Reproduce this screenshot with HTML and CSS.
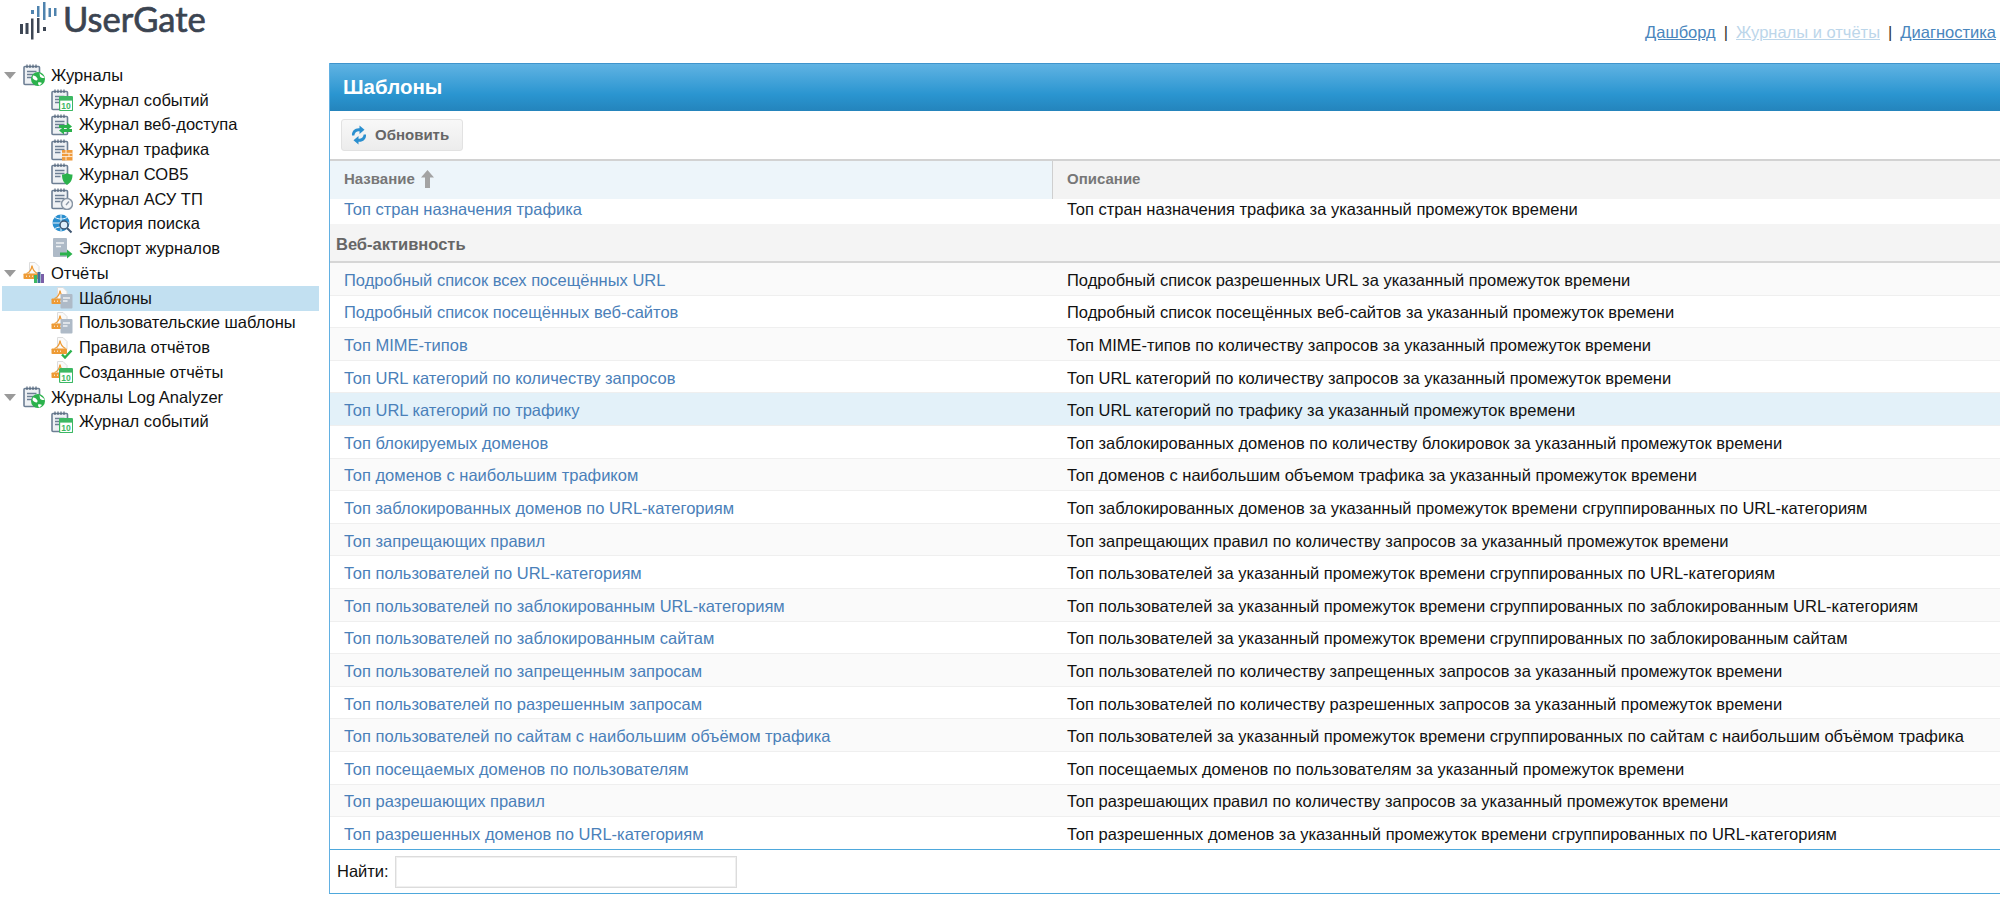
FILE: index.html
```html
<!DOCTYPE html>
<html lang="ru">
<head>
<meta charset="utf-8">
<title>UserGate</title>
<link rel="stylesheet" href="styles.css">
</head>
<body>
<svg class="defs" width="0" height="0" aria-hidden="true">
  <defs>
    <symbol id="note" viewBox="0 0 22 22">
      <rect x="1" y="2.5" width="15.500" height="18" rx="1" fill="#eef1f4" stroke="#6d7f94" stroke-width="1.6"/>
      <path d="M4 .5v3.500M7 .5v3.500M10 .5v3.500M13 .5v3.500" stroke="#55677c" stroke-width="1.2"/>
      <path d="M4 7.500h9.500M4 10.500h9.500M4 13.500h5.500" stroke="#6d7f94" stroke-width="1.300"/>
    </symbol>
    <symbol id="pdf" viewBox="0 0 22 22">
      <path d="M6.500 0.500h5.500l4 4v8H6.500z" fill="#fafafa" stroke="#dcdcdc"/>
      <path d="M3.500 11.500c3-1 5-4 5.500-8 .5 4 2.500 6.500 5.500 8" fill="none" stroke="#ee9b35" stroke-width="1.300"/>
      <rect x="0.500" y="11.500" width="15.500" height="5.500" rx=".8" fill="#ee9b35"/>
      <path d="M3 14.200h1M6 14.200h1M9 14.200h1" stroke="#fff" stroke-width="1"/>
    </symbol>
    <symbol id="form" viewBox="0 0 22 22">
      <rect x="9.500" y="7" width="12" height="14.500" rx="1" fill="#aebac7"/>
      <path d="M12 11h7M12 14h4.500" stroke="#eef1f4" stroke-width="1.300"/>
    </symbol>
    <symbol id="cal" viewBox="0 0 22 22">
      <rect x="8.600" y="7.600" width="13" height="14" rx="1" fill="#fff" stroke="#3cb863" stroke-width="1.200"/>
      <rect x="8.600" y="7.600" width="13" height="4" fill="#3cb863"/>
      <text x="15.100" y="20" class="cal-num">10</text>
    </symbol>
    <symbol id="earth" viewBox="0 0 22 22">
      <circle cx="15" cy="15" r="7" fill="#2bb24c"/>
      <path d="M10 11.500c2 0 3.500 1 4 2.500 1 .5 .5 2.500-.5 2.500-1.500 0-3-1-4-2.500zM16.500 9c1 1.500 3.500 2 5 4.500-1.500 1-3.500 .5-4.500-1zM15 18.500c1.500-.5 3-.5 4 .5l-2.500 2.500c-1 0-1.500-2-1.500-3z" fill="#fff"/>
    </symbol>
  </defs>
</svg>

<header class="top">
  <div class="logo">
    <svg class="logo-mark" width="40" height="40" viewBox="0 0 40 40">
      <g class="bars-dark">
        <rect x="1" y="24" width="3" height="10"/>
        <rect x="6.500" y="23" width="3" height="11"/>
        <rect x="12" y="18.500" width="2.500" height="21"/>
        <rect x="18" y="18" width="2.500" height="15"/>
        <rect x="24" y="27" width="3" height="4"/>
      </g>
      <g class="bars-blue">
        <rect x="12" y="10" width="3" height="4"/>
        <rect x="18" y="6" width="2.500" height="11"/>
        <rect x="24" y="2" width="2.500" height="18"/>
        <rect x="29.500" y="8" width="2.500" height="9"/>
        <rect x="35" y="8" width="2.500" height="8"/>
      </g>
    </svg>
    <span class="logo-text">UserGate</span>
  </div>
  <nav class="nav">
    <a href="#">Дашборд</a><span class="sep">|</span><a href="#" class="off">Журналы и отчёты</a><span class="sep">|</span><a href="#">Диагностика</a>
  </nav>
</header>

<main class="main">
  <aside class="tree">
    <div class="node parent"><i class="arrow"></i><svg class="ico"><use href="#note"/><use href="#earth"/></svg>Журналы</div>
    <div class="node"><svg class="ico"><use href="#note"/><use href="#cal"/></svg>Журнал событий</div>
    <div class="node"><svg class="ico" viewBox="0 0 22 22"><use href="#note" width="22" height="22"/><path d="M8 11h8V8.500l5 4-5 4V14H8z" fill="#2bb24c"/><path d="M21 15h-8v-2.500l-5 4 5 4V18h8z" fill="#2bb24c"/></svg>Журнал веб-доступа</div>
    <div class="node"><svg class="ico" viewBox="0 0 22 22"><use href="#note" width="22" height="22"/><rect x="11" y="11" width="10.500" height="10.500" fill="#ef9a3a"/><path d="M11 14.300h10.500M11 17.600h10.500M15 11v3.300M18 14.300v3.300M15 17.600V21.500" stroke="#fff" stroke-width=".8"/></svg>Журнал трафика</div>
    <div class="node"><svg class="ico" viewBox="0 0 22 22"><use href="#note" width="22" height="22"/><path d="M11 11.500c3.500 0 5-1.500 5-1.500s1.500 1.500 5.500 1.500c0 5-1.500 8-5.500 10.500-3.500-2.500-5-5.500-5-10.500z" fill="#2bb24c"/></svg>Журнал СОВ5</div>
    <div class="node"><svg class="ico" viewBox="0 0 22 22"><use href="#note" width="22" height="22"/><circle cx="16" cy="16" r="5.500" fill="#f4f5f7" stroke="#8a97a6" stroke-width="1.500"/><path d="M15 17l3-3.500" stroke="#8a97a6" stroke-width="1.300"/></svg>Журнал АСУ ТП</div>
    <div class="node"><svg class="ico" viewBox="0 0 22 22"><circle cx="10" cy="10" r="8.500" fill="#2a8fcf"/><path d="M1.500 10h17M10 1.500v17M4 4.500c4 2 8 2 12 0M4 15.500c4-2 8-2 12 0" stroke="#fff" stroke-width=".9" fill="none"/><circle cx="13" cy="12" r="4" fill="#dfeefa" stroke="#3e5672" stroke-width="1.500"/><path d="M16 15l4.500 4.500" stroke="#3e5672" stroke-width="2"/></svg>История поиска</div>
    <div class="node"><svg class="ico" viewBox="0 0 22 22"><rect x="2" y="0" width="14" height="19" rx="1" fill="#aebac7"/><path d="M5 5h8M5 8.500h5" stroke="#eef1f4" stroke-width="1.500"/><path d="M9 14.500h7V11.500l5.500 4.500-5.500 4.500v-3H9z" fill="#2bb24c"/></svg>Экспорт журналов</div>
    <div class="node parent"><i class="arrow"></i><svg class="ico" viewBox="0 0 22 22"><use href="#pdf" width="22" height="22"/><rect x="11" y="13" width="3" height="8" fill="#3cb863"/><rect x="14.500" y="10" width="3" height="11" fill="#3e6f9e"/><rect x="18" y="12" width="3" height="9" fill="#7a5fa8"/></svg>Отчёты</div>
    <div class="node selected"><svg class="ico"><use href="#pdf"/><use href="#form"/></svg>Шаблоны</div>
    <div class="node"><svg class="ico"><use href="#pdf"/><use href="#form"/></svg>Пользовательские шаблоны</div>
    <div class="node"><svg class="ico" viewBox="0 0 22 22"><use href="#pdf" width="22" height="22"/><path d="M11 17.500l3 3 6.500-7" fill="none" stroke="#2bb24c" stroke-width="2.400"/></svg>Правила отчётов</div>
    <div class="node"><svg class="ico"><use href="#pdf"/><use href="#cal"/></svg>Созданные отчёты</div>
    <div class="node parent"><i class="arrow"></i><svg class="ico"><use href="#note"/><use href="#earth"/></svg>Журналы Log Analyzer</div>
    <div class="node"><svg class="ico"><use href="#note"/><use href="#cal"/></svg>Журнал событий</div>
  </aside>

  <section class="panel">
    <h1 class="panel-title">Шаблоны</h1>
    <div class="toolbar">
      <button class="btn" type="button">
        <svg class="btn-ico" width="18" height="20" viewBox="0 0 18 20">
          <path d="M2 10.500C1.500 6 5 2.800 9.500 3.200V.5l5 4.300-5 4.300V6.300C7 6 4.600 7.500 4.300 10.500z" fill="#2a8fcf"/>
          <path d="M16 9.500c.5 4.500-3 7.700-7.500 7.300v2.700l-5-4.300 5-4.300v2.800c2.500.3 4.900-1.200 5.200-4.200z" fill="#2a8fcf"/>
        </svg>
        Обновить
      </button>
    </div>
    <div class="col-head">
      <div class="col-name">Название
        <svg class="sort" width="13" height="18" viewBox="0 0 13 18"><path d="M6.500 0L13 7.500H9V18H4V7.500H0z" fill="#a3a3a3"/></svg>
      </div>
      <div class="col-desc">Описание</div>
    </div>
    <div class="list">
      <div class="row partial"><a href="#" class="c-name">Топ стран назначения трафика</a><span class="c-desc">Топ стран назначения трафика за указанный промежуток времени</span></div>
      <div class="group">Веб-активность</div>
      <div class="row"><a href="#" class="c-name">Подробный список всех посещённых URL</a><span class="c-desc">Подробный список разрешенных URL за указанный промежуток времени</span></div>
      <div class="row"><a href="#" class="c-name">Подробный список посещённых веб-сайтов</a><span class="c-desc">Подробный список посещённых веб-сайтов за указанный промежуток времени</span></div>
      <div class="row"><a href="#" class="c-name">Топ MIME-типов</a><span class="c-desc">Топ MIME-типов по количеству запросов за указанный промежуток времени</span></div>
      <div class="row"><a href="#" class="c-name">Топ URL категорий по количеству запросов</a><span class="c-desc">Топ URL категорий по количеству запросов за указанный промежуток времени</span></div>
      <div class="row hover"><a href="#" class="c-name">Топ URL категорий по трафику</a><span class="c-desc">Топ URL категорий по трафику за указанный промежуток времени</span></div>
      <div class="row"><a href="#" class="c-name">Топ блокируемых доменов</a><span class="c-desc">Топ заблокированных доменов по количеству блокировок за указанный промежуток времени</span></div>
      <div class="row"><a href="#" class="c-name">Топ доменов с наибольшим трафиком</a><span class="c-desc">Топ доменов с наибольшим объемом трафика за указанный промежуток времени</span></div>
      <div class="row"><a href="#" class="c-name">Топ заблокированных доменов по URL-категориям</a><span class="c-desc">Топ заблокированных доменов за указанный промежуток времени сгруппированных по URL-категориям</span></div>
      <div class="row"><a href="#" class="c-name">Топ запрещающих правил</a><span class="c-desc">Топ запрещающих правил по количеству запросов за указанный промежуток времени</span></div>
      <div class="row"><a href="#" class="c-name">Топ пользователей по URL-категориям</a><span class="c-desc">Топ пользователей за указанный промежуток времени сгруппированных по URL-категориям</span></div>
      <div class="row"><a href="#" class="c-name">Топ пользователей по заблокированным URL-категориям</a><span class="c-desc">Топ пользователей за указанный промежуток времени сгруппированных по заблокированным URL-категориям</span></div>
      <div class="row"><a href="#" class="c-name">Топ пользователей по заблокированным сайтам</a><span class="c-desc">Топ пользователей за указанный промежуток времени сгруппированных по заблокированным сайтам</span></div>
      <div class="row"><a href="#" class="c-name">Топ пользователей по запрещенным запросам</a><span class="c-desc">Топ пользователей по количеству запрещенных запросов за указанный промежуток времени</span></div>
      <div class="row"><a href="#" class="c-name">Топ пользователей по разрешенным запросам</a><span class="c-desc">Топ пользователей по количеству разрешенных запросов за указанный промежуток времени</span></div>
      <div class="row"><a href="#" class="c-name">Топ пользователей по сайтам с наибольшим объёмом трафика</a><span class="c-desc">Топ пользователей за указанный промежуток времени сгруппированных по сайтам с наибольшим объёмом трафика</span></div>
      <div class="row"><a href="#" class="c-name">Топ посещаемых доменов по пользователям</a><span class="c-desc">Топ посещаемых доменов по пользователям за указанный промежуток времени</span></div>
      <div class="row"><a href="#" class="c-name">Топ разрешающих правил</a><span class="c-desc">Топ разрешающих правил по количеству запросов за указанный промежуток времени</span></div>
      <div class="row"><a href="#" class="c-name">Топ разрешенных доменов по URL-категориям</a><span class="c-desc">Топ разрешенных доменов за указанный промежуток времени сгруппированных по URL-категориям</span></div>
    </div>
    <div class="search">
      <label class="search-label" for="q">Найти:</label>
      <input class="search-input" id="q" type="text">
    </div>
  </section>
</main>
</body>
</html>
```

FILE: styles.css
```css
* { box-sizing: border-box; }
html, body { margin: 0; height: 100%; overflow: hidden; background: #fff; }
body { font-family: "Liberation Sans", Arial, sans-serif; font-size: 16.500px; color: #111; }
.defs { display: block; height: 0; }

.top { display: flex; justify-content: space-between; height: 63px; padding-right: 4px; }
.logo { display: flex; align-items: flex-start; padding-left: 19px; }
.logo-mark { flex: none; margin-right: 4px; }
.bars-dark { fill: #3d4654; }
.bars-blue { fill: #4f83ae; }
.logo-text { font-family: Lato, sans-serif; font-size: 34.500px; font-weight: 400; line-height: 38px; color: #3b4451; -webkit-text-stroke: 0.7px #3b4451; }
.nav { display: flex; align-items: baseline; padding-top: 23px; line-height: 18px; }
.nav a { color: #4a86bd; text-decoration: underline; }
.nav a.off { color: #bcd6ea; }
.sep { margin: 0 8px; color: #333; }

.main { display: flex; height: 831px; }
.tree { flex: none; width: 329px; padding: 0 10px 0 2px; }
.node { display: flex; align-items: center; height: 24.750px; padding-left: 49px; white-space: nowrap; }
.node.parent { padding-left: 0; }
.node.selected { background: #c2e0f1; }
.arrow { flex: none; width: 0; height: 0; margin: 0 7px 0 2px; border-style: solid; border-width: 7px 6px 0; border-color: #9a9a9a transparent transparent; }
.ico { flex: none; width: 22px; height: 22px; margin-right: 6px; }
.cal-num { font: bold 8.500px "Liberation Sans", sans-serif; fill: #3cb863; text-anchor: middle; }

.panel { flex: none; width: 1680px; height: 831px; display: flex; flex-direction: column; border-left: 1px solid #62b0e2; border-bottom: 1px solid #4ea8dc; }
.panel-title { flex: none; margin: 0; height: 48px; padding: 0 0 2px 13px; display: flex; align-items: center; font-size: 20.500px; font-weight: bold; color: #fff; border-top: 1px solid #3f94cc; background: linear-gradient(#60b3e3 0%, #2a95d0 65%, #2484bc 100%); }
.toolbar { flex: none; height: 48px; padding: 8px 11px; }
.btn { display: flex; align-items: center; gap: 7px; width: 122px; height: 32px; padding: 0 0 1px 8px; font: bold 15px "Liberation Sans", sans-serif; color: #666; background: linear-gradient(#f8f8f8, #ececec); border: 1px solid #e2e2e2; border-radius: 3px; }
.btn-ico { flex: none; }

.col-head { flex: none; display: flex; height: 40px; border-top: 2px solid #d2d2d2; background: #f3f3f3; font-size: 15px; font-weight: bold; color: #777; }
.col-name { flex: none; width: 723px; padding: 0 0 3px 14px; display: flex; align-items: center; gap: 6px; background: #edf5fa; border-right: 1px solid #cfcfcf; }
.col-desc { padding: 0 0 3px 14px; display: flex; align-items: center; }

.list { flex: 1; min-height: 0; overflow: hidden; }
.row { display: flex; align-items: center; height: 32.600px; padding-top: 3px; border-bottom: 1px solid #efefef; white-space: nowrap; }
.row:nth-child(odd) { background: #fafafa; }
.row.partial { height: 25px; padding-top: 0; align-items: flex-end; padding-bottom: 5px; background: #fff; border-bottom: 0; }
.row.hover { background: #e3f1f9; }
.c-name { flex: none; width: 722px; padding-left: 14px; color: #4a80b9; text-decoration: none; }
.c-desc { padding-left: 15px; color: #111; }
.group { height: 39px; padding: 4px 0 0 6px; display: flex; align-items: center; font-size: 16.500px; font-weight: bold; color: #666; background: #f4f4f4; border-bottom: 2px solid #d6d6d6; }

.search { flex: none; height: 44px; display: flex; align-items: center; padding-left: 7px; gap: 6px; border-top: 1px solid #4ea8dc; }
.search-input { width: 342px; height: 32px; padding: 0 4px; background: #fff; border: 1px solid #dcdcdc; box-shadow: inset 0 0 0 1px #f0f0f0; outline: 0; }
```
